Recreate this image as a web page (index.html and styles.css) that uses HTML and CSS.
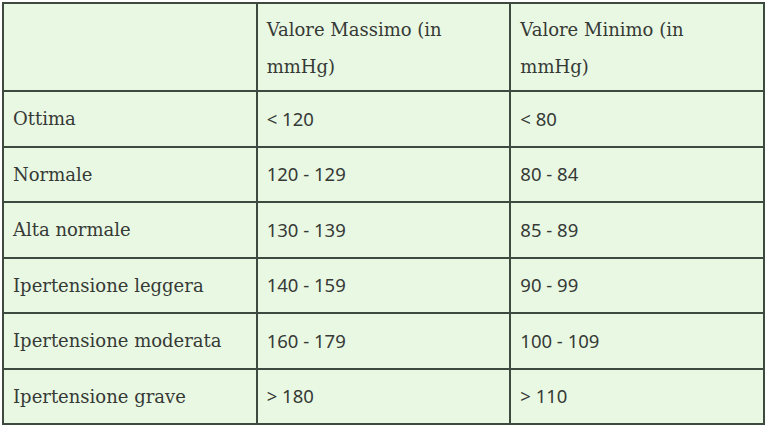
FILE: index.html
```html
<!DOCTYPE html>
<html lang="it">
<head>
<meta charset="utf-8">
<link rel="stylesheet" href="styles.css">
</head>
<body>
<table class="bp">
  <tr class="head">
    <td></td>
    <td>Valore Massimo (in mmHg)</td>
    <td>Valore Minimo (in mmHg)</td>
  </tr>
  <tr><td>Ottima</td><td><span class="num">&lt; 120</span></td><td><span class="num">&lt; 80</span></td></tr>
  <tr><td>Normale</td><td><span class="num">120 - 129</span></td><td><span class="num">80 - 84</span></td></tr>
  <tr><td>Alta normale</td><td><span class="num">130 - 139</span></td><td><span class="num">85 - 89</span></td></tr>
  <tr><td>Ipertensione leggera</td><td><span class="num">140 - 159</span></td><td><span class="num">90 - 99</span></td></tr>
  <tr><td>Ipertensione moderata</td><td><span class="num">160 - 179</span></td><td><span class="num">100 - 109</span></td></tr>
  <tr><td>Ipertensione grave</td><td><span class="num">&gt; 180</span></td><td><span class="num">&gt; 110</span></td></tr>
</table>
</body>
</html>
```
FILE: styles.css
```css
html, body {
  margin: 0;
  padding: 0;
  background: #ffffff;
}
body {
  padding: 2px 2px 0 2px;
}
.bp {
  border-collapse: collapse;
  width: 763px;
  table-layout: fixed;
  background: #e9f8e3;
  font-family: "DejaVu Serif", serif;
  font-size: 18px;
  color: #363a36;
}
.bp td {
  border: 2px solid #3d4a3f;
  padding: 0 9px;
  height: 53.5px;
  vertical-align: middle;
  line-height: 37px;
  text-align: left;
}
.bp .head td {
  height: 79px;
  vertical-align: top;
  padding-top: 7px;
  padding-bottom: 0;
}
.num {
  font-family: "Noto Sans", sans-serif;
  font-size: 18.5px;
}
```
